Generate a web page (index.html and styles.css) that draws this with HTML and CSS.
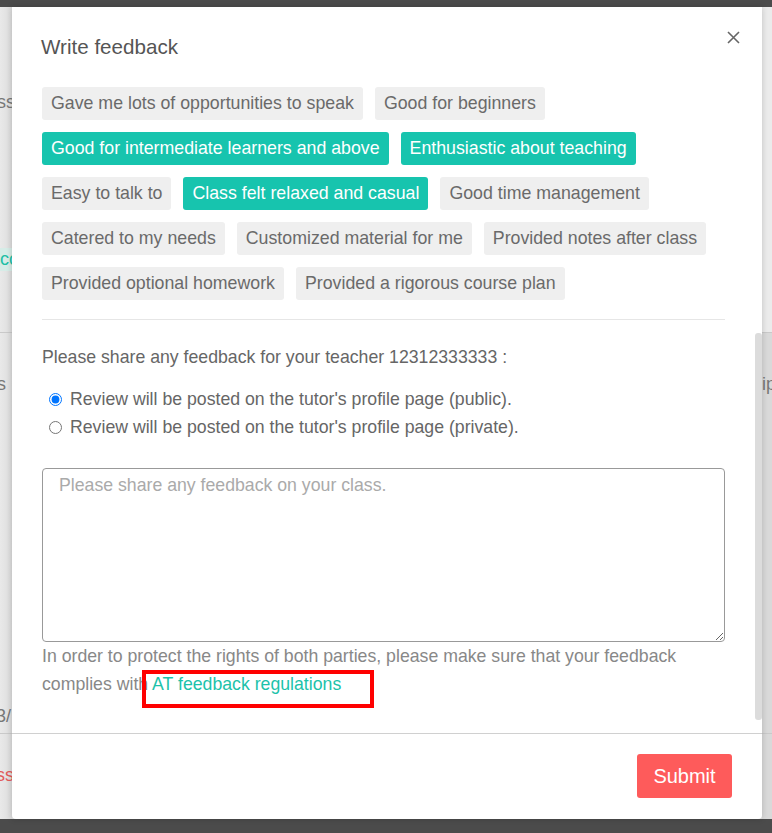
FILE: index.html
```html
<!DOCTYPE html>
<html lang="en">
<head>
<meta charset="utf-8">
<title>Write feedback</title>
<link rel="stylesheet" href="styles.css">
</head>
<body>
<div class="page">
  <div class="bg-left">
    <span class="frag f-ss">ss</span>
    <span class="frag f-cc">cc</span>
    <span class="frag f-s">s</span>
    <span class="frag f-3">3/</span>
    <span class="frag f-red">ss</span>
  </div>
  <div class="bg-right">
    <span class="frag f-ip">ip</span>
  </div>
  <div class="bg-line l1"></div>
  <div class="bg-line l2"></div>

  <div class="modal">
    <div class="modal-header">
      <h2 class="title">Write feedback</h2>
      <button class="close" aria-label="Close">
        <svg width="13" height="13" viewBox="0 0 13 13"><path d="M1 1L12 12M12 1L1 12" stroke="#666" stroke-width="1.6" fill="none"/></svg>
      </button>
    </div>
    <div class="modal-body">
      <div class="tags">
        <span class="tag">Gave me lots of opportunities to speak</span>
        <span class="tag">Good for beginners</span>
        <span class="tag on">Good for intermediate learners and above</span>
        <span class="tag on">Enthusiastic about teaching</span>
        <span class="tag">Easy to talk to</span>
        <span class="tag on">Class felt relaxed and casual</span>
        <span class="tag">Good time management</span>
        <span class="tag">Catered to my needs</span>
        <span class="tag">Customized material for me</span>
        <span class="tag">Provided notes after class</span>
        <span class="tag">Provided optional homework</span>
        <span class="tag">Provided a rigorous course plan</span>
      </div>
      <div class="divider"></div>
      <p class="prompt">Please share any feedback for your teacher 12312333333 :</p>
      <div class="radios">
        <label class="radio"><input type="radio" name="vis" checked> Review will be posted on the tutor's profile page (public).</label>
        <label class="radio"><input type="radio" name="vis"> Review will be posted on the tutor's profile page (private).</label>
      </div>
      <textarea class="text" placeholder="Please share any feedback on your class."></textarea>
      <p class="note">In order to protect the rights of both parties, please make sure that your feedback complies with <a class="link">AT feedback regulations</a><span class="highlight"></span></p>
      <div class="scroll-thumb"></div>
    </div>
    <div class="modal-footer">
      <button class="submit">Submit</button>
    </div>
  </div>
</div>
</body>
</html>
```
FILE: styles.css
```css
html, body {
  margin: 0;
  padding: 0;
}
body {
  background: #4b4b4b;
  font-family: "Liberation Sans", Arial, sans-serif;
  height: 833px;
  overflow: hidden;
}
.page {
  position: relative;
  margin-top: 7px;
  height: 812px;
  background: #e3e3e3;
  padding-left: 12px;
  padding-right: 10px;
}
.bg-left {
  position: absolute;
  left: 0;
  top: 0;
  width: 12px;
  height: 100%;
  background: linear-gradient(to right, #e9e9e9, #dcdcdc);
}
.bg-right {
  position: absolute;
  right: 0;
  top: 0;
  width: 10px;
  height: 100%;
  background: linear-gradient(to bottom, #ebebeb 0, #ebebeb 326px, #d9d9d9 326px);
}
.frag {
  position: absolute;
  font-size: 18px;
  color: #777;
  white-space: nowrap;
}
.f-ss { left: -3px; top: 85px; }
.f-cc { left: -6px; top: 241px; color: #20bfa5; background: #d6ece7; padding: 1px 8px 1px 6px; }
.f-s { left: -3px; top: 367px; }
.f-3 { left: -4px; top: 699px; }
.f-red { left: -4px; top: 758px; color: #e25a5a; }
.f-ip { left: 0; top: 367px; }
.bg-line {
  position: absolute;
  left: 0;
  right: 0;
  height: 1px;
  background: #c9c9c9;
}
.l1 { top: 325px; }
.l2 { top: 726px; }

.modal {
  position: relative;
  z-index: 2;
  height: 812px;
  background: #fff;
  border-radius: 0 0 4px 4px;
  box-shadow: 0 0 6px rgba(0,0,0,0.18);
  display: flex;
  flex-direction: column;
}
.modal-header {
  display: flex;
  justify-content: space-between;
  align-items: flex-start;
  padding: 26px 22px 0 29px;
}
.title {
  margin: 0;
  font-weight: normal;
  font-size: 20.6px;
  line-height: 28px;
  color: #555;
}
.close {
  border: 0;
  background: none;
  padding: 0;
  margin-top: -2px;
  width: 14px;
  height: 14px;
  cursor: pointer;
}
.modal-body {
  position: relative;
  flex: 1;
  padding: 26px 37px 0 30px;
}
.tags {
  display: flex;
  flex-wrap: wrap;
  gap: 12px 12px;
}
.tag {
  background: #efefef;
  color: #6a6a6a;
  font-size: 17.75px;
  line-height: 33px;
  padding: 0 9px;
  border-radius: 3px;
  white-space: nowrap;
}
.tag.on {
  background: #17c4ae;
  color: #fff;
}
.divider {
  height: 1px;
  background: #e6e6e6;
  margin-top: 19px;
}
.prompt {
  margin: 25px 0 0;
  font-size: 17.7px;
  line-height: 24px;
  color: #666;
}
.radios {
  margin-top: 16px;
  display: flex;
  flex-direction: column;
}
.radio {
  display: flex;
  align-items: center;
  font-size: 17.7px;
  line-height: 28px;
  color: #666;
}
.radio input {
  margin: 0 8px 0 7px;
  width: 13px;
  height: 13px;
}
.text {
  display: block;
  box-sizing: border-box;
  margin-top: 27px;
  width: 100%;
  height: 174px;
  border: 1px solid #999;
  border-radius: 4px;
  padding: 5px 16px;
  font-family: "Liberation Sans", Arial, sans-serif;
  font-size: 17.7px;
  line-height: 22px;
  color: #555;
  resize: vertical;
}
.text::placeholder {
  color: #aaa;
}
.note {
  position: relative;
  margin: 0;
  font-size: 17.7px;
  line-height: 28px;
  color: #888;
}
.link {
  color: #1cc2aa;
  cursor: pointer;
}
.highlight {
  position: absolute;
  left: 100px;
  top: 28px;
  width: 232px;
  height: 38px;
  box-sizing: border-box;
  border: 4px solid #ff0000;
}
.scroll-thumb {
  position: absolute;
  right: 0;
  top: 272px;
  width: 7px;
  height: 387px;
  background: #dcdcdc;
  border-radius: 3px;
}
.modal-footer {
  border-top: 1px solid #d0d0d0;
  height: 86px;
  box-sizing: border-box;
  padding: 20px 30px 0;
  display: flex;
  justify-content: flex-end;
  align-items: flex-start;
}
.submit {
  border: 0;
  background: #fe5b5b;
  color: #fff;
  font-family: "Liberation Sans", Arial, sans-serif;
  font-size: 20px;
  width: 95px;
  height: 44px;
  border-radius: 3px;
  cursor: pointer;
}
```
